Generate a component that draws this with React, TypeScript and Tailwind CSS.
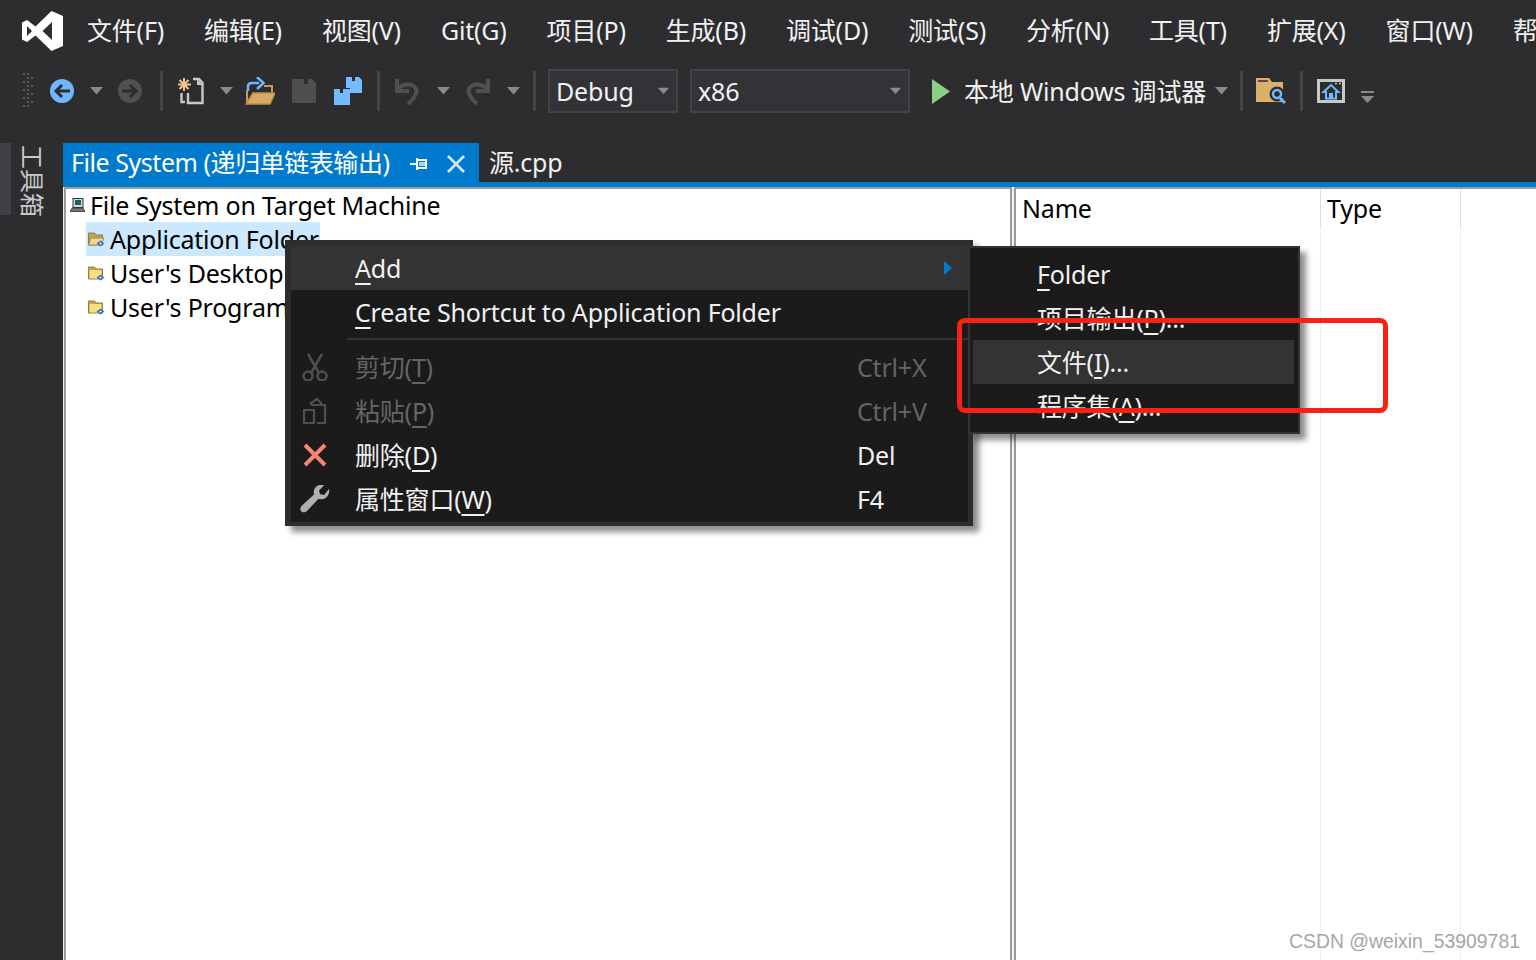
import type { ReactNode } from 'react';

const MENUS = ['文件(F)', '编辑(E)', '视图(V)', 'Git(G)', '项目(P)', '生成(B)', '调试(D)', '测试(S)', '分析(N)', '工具(T)', '扩展(X)', '窗口(W)', '帮助(H)'];

function Caret({ className = '' }: { className?: string }) {
  return (
    <svg width="13" height="8" viewBox="0 0 13 8" className={`shrink-0 ${className}`}>
      <path d="M0 0h13L6.5 7.5z" fill="#8a8a8c" />
    </svg>
  );
}

function Sep({ className = '' }: { className?: string }) {
  return <div className={`w-[3px] h-[40px] bg-[#444446] shrink-0 ${className}`} />;
}

function Grip() {
  return (
    <svg width="10" height="36" viewBox="0 0 10 36" className="shrink-0">
      {[0, 1, 2, 3, 4, 5, 6, 7, 8].map((i) => (
        <g key={i} fill="#5a5a5c">
          <rect x={i % 2 ? 4 : 0} y={i * 4} width="2" height="2" />
          <rect x={i % 2 ? 8 : 4} y={i * 4} width="2" height="2" />
        </g>
      ))}
    </svg>
  );
}

function VsLogo() {
  return (
    <svg width="41" height="40" viewBox="0 0 41 40" className="shrink-0">
      <path fill="#fff" d="M29.5 0 41 5v30l-11.500 5L13.500 24.500 5 31l-5-2.500v-17L5 9l8.500 6.500zM30 11l-9.500 9 9.500 9zM5 15v10l5-5z" />
    </svg>
  );
}

function BackIcon() {
  return (
    <svg width="24" height="24" viewBox="0 0 24 24">
      <circle cx="12" cy="12" r="12" fill="#6fb8ff" />
      <path d="M20 12H7M12 6l-6 6 6 6" fill="none" stroke="#2d2d30" strokeWidth="3" />
    </svg>
  );
}

function ForwardIcon() {
  return (
    <svg width="24" height="24" viewBox="0 0 24 24">
      <circle cx="12" cy="12" r="12" fill="#505052" />
      <path d="M4 12h13M12 6l6 6-6 6" fill="none" stroke="#2d2d30" strokeWidth="3" />
    </svg>
  );
}

function NewProjectIcon() {
  return (
    <svg width="27" height="28" viewBox="0 0 27 28">
      <path d="M7 1v13M1 7.500h13M2.500 3l9 9M11.500 3l-9 9" stroke="#f0c48a" strokeWidth="2" />
      <path d="M16 2h6l3.500 4v20H11V16" fill="none" stroke="#c8c8c8" strokeWidth="2.400" />
      <path d="M20 2l6 6h-6z" fill="#c8c8c8" />
      <path d="M4.500 16v9H8" fill="none" stroke="#c8c8c8" strokeWidth="2.400" />
    </svg>
  );
}

function OpenIcon() {
  return (
    <svg width="30" height="28" viewBox="0 0 30 28">
      <path d="M3 14V9.500C3 7 5 6 7 6h7" fill="none" stroke="#6fb8ff" strokeWidth="2.500" />
      <path d="M12 0l6.500 6-6.500 6" fill="none" stroke="#6fb8ff" strokeWidth="2.500" />
      <path d="M19 9h8v6M2 13v13" fill="none" stroke="#c99a52" strokeWidth="2" />
      <path d="M8 16h22l-5 11H1z" fill="#d8a964" stroke="#c08f48" strokeWidth="1.500" />
    </svg>
  );
}

function SaveIcon() {
  return (
    <svg width="24" height="24" viewBox="0 0 24 24">
      <path d="M0 0h20l4 4v20H0z" fill="#4f4f50" />
      <rect x="12" y="0" width="4" height="5" fill="#2d2d30" />
    </svg>
  );
}

function SaveAllIcon() {
  return (
    <svg width="28" height="28" viewBox="0 0 28 28">
      <path d="M12 0h13l3 3v13H12z" fill="#75bbff" />
      <rect x="18" y="0" width="3" height="4" fill="#2d2d30" />
      <path d="M16 12v-1h-5v1z" fill="#2d2d30" />
      <path d="M0 12h13l3 3v13H0z" fill="#75bbff" />
      <rect x="6" y="12" width="3" height="4" fill="#2d2d30" />
    </svg>
  );
}

function UndoIcon({ flip = false }: { flip?: boolean }) {
  return (
    <svg width="25" height="28" viewBox="0 0 25 28" className={flip ? '-scale-x-100' : ''}>
      <path d="M3 2v12h12" fill="none" stroke="#505052" strokeWidth="4" />
      <path d="M4 12c5-6 15-6 18 0 2 5-3 10-8 15" fill="none" stroke="#505052" strokeWidth="4" />
    </svg>
  );
}

function PlayIcon() {
  return (
    <svg width="18" height="25" viewBox="0 0 18 25" className="shrink-0">
      <path d="M0 0l18 12.500L0 25z" fill="#89d185" />
    </svg>
  );
}

function FolderSearchIcon() {
  return (
    <svg width="30" height="26" viewBox="0 0 30 26">
      <path d="M0 0h13l3 4h11v20H0z" fill="#d9b06c" />
      <path d="M2 3h10" stroke="#2d2d30" strokeWidth="1.500" />
      <circle cx="21" cy="16" r="6.500" fill="#2d2d30" stroke="#2d2d30" strokeWidth="2" />
      <circle cx="21" cy="16" r="4" fill="none" stroke="#6fb8ff" strokeWidth="2.500" />
      <path d="M24 20l5 5" stroke="#6fb8ff" strokeWidth="3" />
    </svg>
  );
}

function HomeIcon() {
  return (
    <svg width="28" height="24" viewBox="0 0 28 24">
      <path d="M1.500 1.500h25v21h-25z" fill="none" stroke="#c8c8c8" strokeWidth="3" />
      <path d="M14 6l-7.500 7H9v6.500h10V13h2.500z" fill="none" stroke="#6fb8ff" strokeWidth="2" />
      <rect x="12" y="14" width="4" height="5" fill="#6fb8ff" />
      <path d="M18 4.500h2M22 4.500h2" stroke="#c8c8c8" strokeWidth="1.500" />
    </svg>
  );
}

function Overflow() {
  return (
    <svg width="13" height="12" viewBox="0 0 13 12" className="mt-[12px]">
      <rect width="13" height="2" fill="#8a8a8c" />
      <path d="M0 5h13l-6.500 7z" fill="#8a8a8c" />
    </svg>
  );
}

function Combo({ label, width }: { label: string; width: string }) {
  return (
    <div className={`${width} h-[44px] flex items-center justify-between pl-[6px] pr-[6px] bg-[#333337] border-2 border-[#434346] shrink-0`}>
      <span className="text-[#f1f1f1]">{label}</span>
      <Caret className="scale-90" />
    </div>
  );
}

function ComputerIcon() {
  return (
    <svg width="15" height="14" viewBox="0 0 15 14">
      <rect x="3" y="0.500" width="10" height="9" fill="#d8d8d8" stroke="#333" />
      <rect x="5" y="2" width="6" height="5" fill="#17616b" />
      <path d="M2 10h11l2 3.500H0z" fill="#777" stroke="#333" strokeWidth="0.800" />
    </svg>
  );
}

function FolderIcon({ open = false }: { open?: boolean }) {
  return (
    <svg width="17" height="15" viewBox="0 0 17 15" className="shrink-0">
      <path d="M0.500 2.500V1h6l1.500 2h6.500v10H0.500z" fill="#c9a24a" stroke="#8a7a50" />
      {open ? <path d="M3 6h13l-3 7H0.500z" fill="#f2d98a" stroke="#a08d55" /> : <rect x="1.500" y="4" width="12" height="8.500" fill="#f8de7e" />}
      <path d="M12.500 8.500l4 3-4 3-4-3z" fill="#3f6fc4" />
      <path d="M12.500 10.500l1.300 1-1.300 1-1.300-1z" fill="#fff" />
    </svg>
  );
}

function TreeRow({ icon, children, className = '' }: { icon: ReactNode; children: ReactNode; className?: string }) {
  return (
    <div className={`h-[34px] flex items-center ${className}`}>
      {icon}
      <span className="ml-[5px] text-black whitespace-nowrap">{children}</span>
    </div>
  );
}

function MenuRow({ icon, label, shortcut, dim, active, arrow }: { icon?: ReactNode; label: ReactNode; shortcut?: string; dim?: boolean; active?: boolean; arrow?: boolean }) {
  return (
    <div className={`h-[44px] flex items-center ${active ? 'bg-[#333334]' : ''} ${dim ? 'text-[#656565]' : 'text-[#f1f1f1]'}`}>
      <div className="w-[64px] pr-[16px] shrink-0 flex justify-center">{icon}</div>
      <div className="flex-1 whitespace-nowrap">{label}</div>
      {shortcut && <div className="w-[111px] shrink-0 whitespace-nowrap">{shortcut}</div>}
      {arrow && (
        <svg width="8" height="14" viewBox="0 0 8 14" className="mr-[16px]">
          <path d="M0 0l8 7-8 7z" fill="#007acc" />
        </svg>
      )}
    </div>
  );
}

function CutIcon() {
  return (
    <svg width="26" height="28" viewBox="0 0 26 28" fill="none" stroke="#505052" strokeWidth="2.500" className="shrink-0">
      <path d="M6 1l11 19M20 1L9 20" />
      <circle cx="6" cy="23" r="4.500" />
      <circle cx="20" cy="23" r="4.500" />
    </svg>
  );
}

function PasteIcon() {
  return (
    <svg width="26" height="28" viewBox="0 0 26 28" fill="none" stroke="#505052" strokeWidth="2.200" className="shrink-0">
      <path d="M9 8V6l6-4 4 4v2" />
      <path d="M9 8h14v18H15" />
      <path d="M2 13h10v13H2z" />
    </svg>
  );
}

function DeleteIcon() {
  return (
    <svg width="24" height="24" viewBox="0 0 24 24" className="shrink-0">
      <path d="M2 2l20 20M22 2L2 22" stroke="#f48771" strokeWidth="4" />
    </svg>
  );
}

function WrenchIcon() {
  return (
    <svg width="30" height="28" viewBox="0 0 30 28" className="shrink-0">
      <path d="M29 4c1 5-2 9-6 10-2 .4-3.500.2-4.500-.2L7 26c-2 2-5 1.500-6 0s-1-3.500.5-5L14 9.500c-.8-3 0-6 2.500-8C18.500 0 21 -.3 24 .5l-5 5 1 3.500 4 1z" fill="#b0b0b0" />
    </svg>
  );
}

const u = 'underline underline-offset-[5px] decoration-2';

export default function App() {
  return (
    <div className="relative w-[1536px] h-[960px] overflow-hidden bg-[#2d2d30] text-[25px] leading-none font-['Noto_Sans','Noto_Sans_CJK_SC',sans-serif] tracking-[-0.2px]">
      {/* menu bar */}
      <div className="h-[61px] flex items-center pl-[22px] whitespace-nowrap text-[#f1f1f1]">
        <VsLogo />
        <div className="ml-[24px] flex gap-[40px]">
          {MENUS.map((m) => (
            <span key={m}>{m}</span>
          ))}
        </div>
      </div>

      {/* toolbar */}
      <div className="h-[60px] flex items-center pl-[23px] whitespace-nowrap">
        <Grip />
        <div className="ml-[17px]"><BackIcon /></div>
        <Caret className="ml-[16px]" />
        <div className="ml-[15px]"><ForwardIcon /></div>
        <Sep className="ml-[18px]" />
        <div className="ml-[14px]"><NewProjectIcon /></div>
        <Caret className="ml-[16px]" />
        <div className="ml-[12px]"><OpenIcon /></div>
        <div className="ml-[17px]"><SaveIcon /></div>
        <div className="ml-[18px]"><SaveAllIcon /></div>
        <Sep className="ml-[15px]" />
        <div className="ml-[14px]"><UndoIcon /></div>
        <Caret className="ml-[18px]" />
        <div className="ml-[16px]"><UndoIcon flip /></div>
        <Caret className="ml-[16px]" />
        <Sep className="ml-[13px]" />
        <Combo label="Debug" width="w-[130px] ml-[12px]" />
        <Combo label="x86" width="w-[220px] ml-[12px]" />
        <div className="ml-[22px]"><PlayIcon /></div>
        <span className="ml-[14px] w-[239px] text-[#f1f1f1]">本地 Windows 调试器</span>
        <Caret className="ml-[12px]" />
        <Sep className="ml-[12px]" />
        <div className="ml-[13px]"><FolderSearchIcon /></div>
        <Sep className="ml-[14px]" />
        <div className="ml-[14px]"><HomeIcon /></div>
        <div className="ml-[16px]"><Overflow /></div>
      </div>

      {/* main area */}
      <div className="h-[839px] flex pt-[22px]">
        <div className="w-[63px] shrink-0 flex">
          <div className="w-[11px] h-[72px] bg-[#3f3f46]" />
          <div className="ml-[9px] mt-[2px] text-[24px] whitespace-nowrap [writing-mode:vertical-rl] [text-orientation:sideways] text-[#c8c8c8] tracking-[0px]">工具箱</div>
        </div>

        <div className="flex-1 flex flex-col min-w-0">
          {/* tabs */}
          <div className="h-[39px] flex shrink-0">
            <div className="w-[416px] flex items-center bg-[#007acc] text-white pl-[8px] whitespace-nowrap">
              <span className="tracking-[-0.45px]">File System (递归单链表输出)</span>
              <svg width="18" height="14" viewBox="0 0 18 14" className="ml-[21px] mt-[3px]">
                <path d="M0 7h6M7 1v12M7 3h9v8H7" fill="none" stroke="#fff" strokeWidth="2" />
                <rect x="9" y="5" width="6" height="4" fill="#a8d4f0" />
              </svg>
              <svg width="20" height="20" viewBox="0 0 20 20" className="ml-[18px] mt-[3px]">
                <path d="M2 2l16 16M18 2L2 18" stroke="#d0e8f8" strokeWidth="2.600" />
              </svg>
            </div>
            <div className="w-[92px] flex items-center pl-[10px] text-[#f1f1f1] whitespace-nowrap">源.cpp</div>
          </div>
          <div className="h-[5px] bg-[#007acc] shrink-0" />

          {/* panels */}
          <div className="flex-1 flex bg-[#f0f0f0]">
            <div className="w-[948px] ml-[1px] border-2 border-b-0 border-[#9a9a9a] bg-white pl-[4px] shrink-0">
              <div className="-mt-[1px]">
                <TreeRow icon={<ComputerIcon />}>File System on Target Machine</TreeRow>
                <div className="pl-[16px]">
                  <div className="w-[234px] bg-[#cce8ff]">
                    <TreeRow icon={<FolderIcon open />} className="pl-[2px]">Application Folder</TreeRow>
                  </div>
                  <TreeRow icon={<FolderIcon />} className="pl-[2px]">User's Desktop</TreeRow>
                  <TreeRow icon={<FolderIcon />} className="pl-[2px]">User's Programs Menu</TreeRow>
                </div>
              </div>
            </div>
            <div className="ml-[2px] flex-1 border-2 border-r-0 border-b-0 border-[#9a9a9a] bg-white flex min-w-0">
              <div className="w-[305px] h-full border-r border-[#eaf2fa] shrink-0">
                <div className="h-[38px] flex items-center pl-[6px] border-r border-[#dedede] -mr-[1px] text-black">Name</div>
              </div>
              <div className="w-[140px] h-full border-r border-[#eaf2fa] shrink-0">
                <div className="h-[38px] flex items-center pl-[6px] border-r border-[#dedede] -mr-[1px] text-black">Type</div>
              </div>
            </div>
          </div>
        </div>
      </div>

      {/* context menu */}
      <div className="absolute left-[285px] top-[240px] w-[688px] h-[286px] bg-[#1b1b1c] border-t-[6px] border-l-[6px] border-r-[5px] border-b-[4px] border-[#2d2d30] shadow-[6px_6px_6px_rgba(0,0,0,0.45)]">
        <MenuRow active arrow label={<><span className={u}>A</span>dd</>} />
        <MenuRow label={<><span className={u}>C</span>reate Shortcut to Application Folder</>} />
        <div className="ml-[56px] h-[2px] mt-[4px] mb-[5px] bg-[#333337]" />
        <MenuRow dim icon={<CutIcon />} label={<>剪切(<span className={u}>T</span>)</>} shortcut="Ctrl+X" />
        <MenuRow dim icon={<PasteIcon />} label={<>粘贴(<span className={u}>P</span>)</>} shortcut="Ctrl+V" />
        <MenuRow icon={<DeleteIcon />} label={<>删除(<span className={u}>D</span>)</>} shortcut="Del" />
        <MenuRow icon={<WrenchIcon />} label={<>属性窗口(<span className={u}>W</span>)</>} shortcut="F4" />
      </div>

      {/* submenu */}
      <div className="absolute left-[968px] top-[246px] w-[332px] h-[188px] bg-[#1b1b1c] border-2 border-[#333337] pl-[3px] pr-[4px] pt-[4px] shadow-[6px_6px_6px_rgba(0,0,0,0.45)]">
        <MenuRow label={<><span className={u}>F</span>older</>} />
        <MenuRow label={<>项目输出(<span className={u}>P</span>)...</>} />
        <MenuRow active label={<>文件(<span className={u}>I</span>)...</>} />
        <MenuRow label={<>程序集(<span className={u}>A</span>)...</>} />
      </div>

      {/* red annotation */}
      <div className="absolute left-[957px] top-[318px] w-[431px] h-[95px] border-[5px] border-[#fb2014] rounded-[8px]" />

      <div className="absolute left-[1289px] top-[931px] text-[19.4px] leading-[20px] tracking-normal text-[#a6a6a6] font-['Liberation_Sans',sans-serif]">CSDN @weixin_53909781</div>
    </div>
  );
}
